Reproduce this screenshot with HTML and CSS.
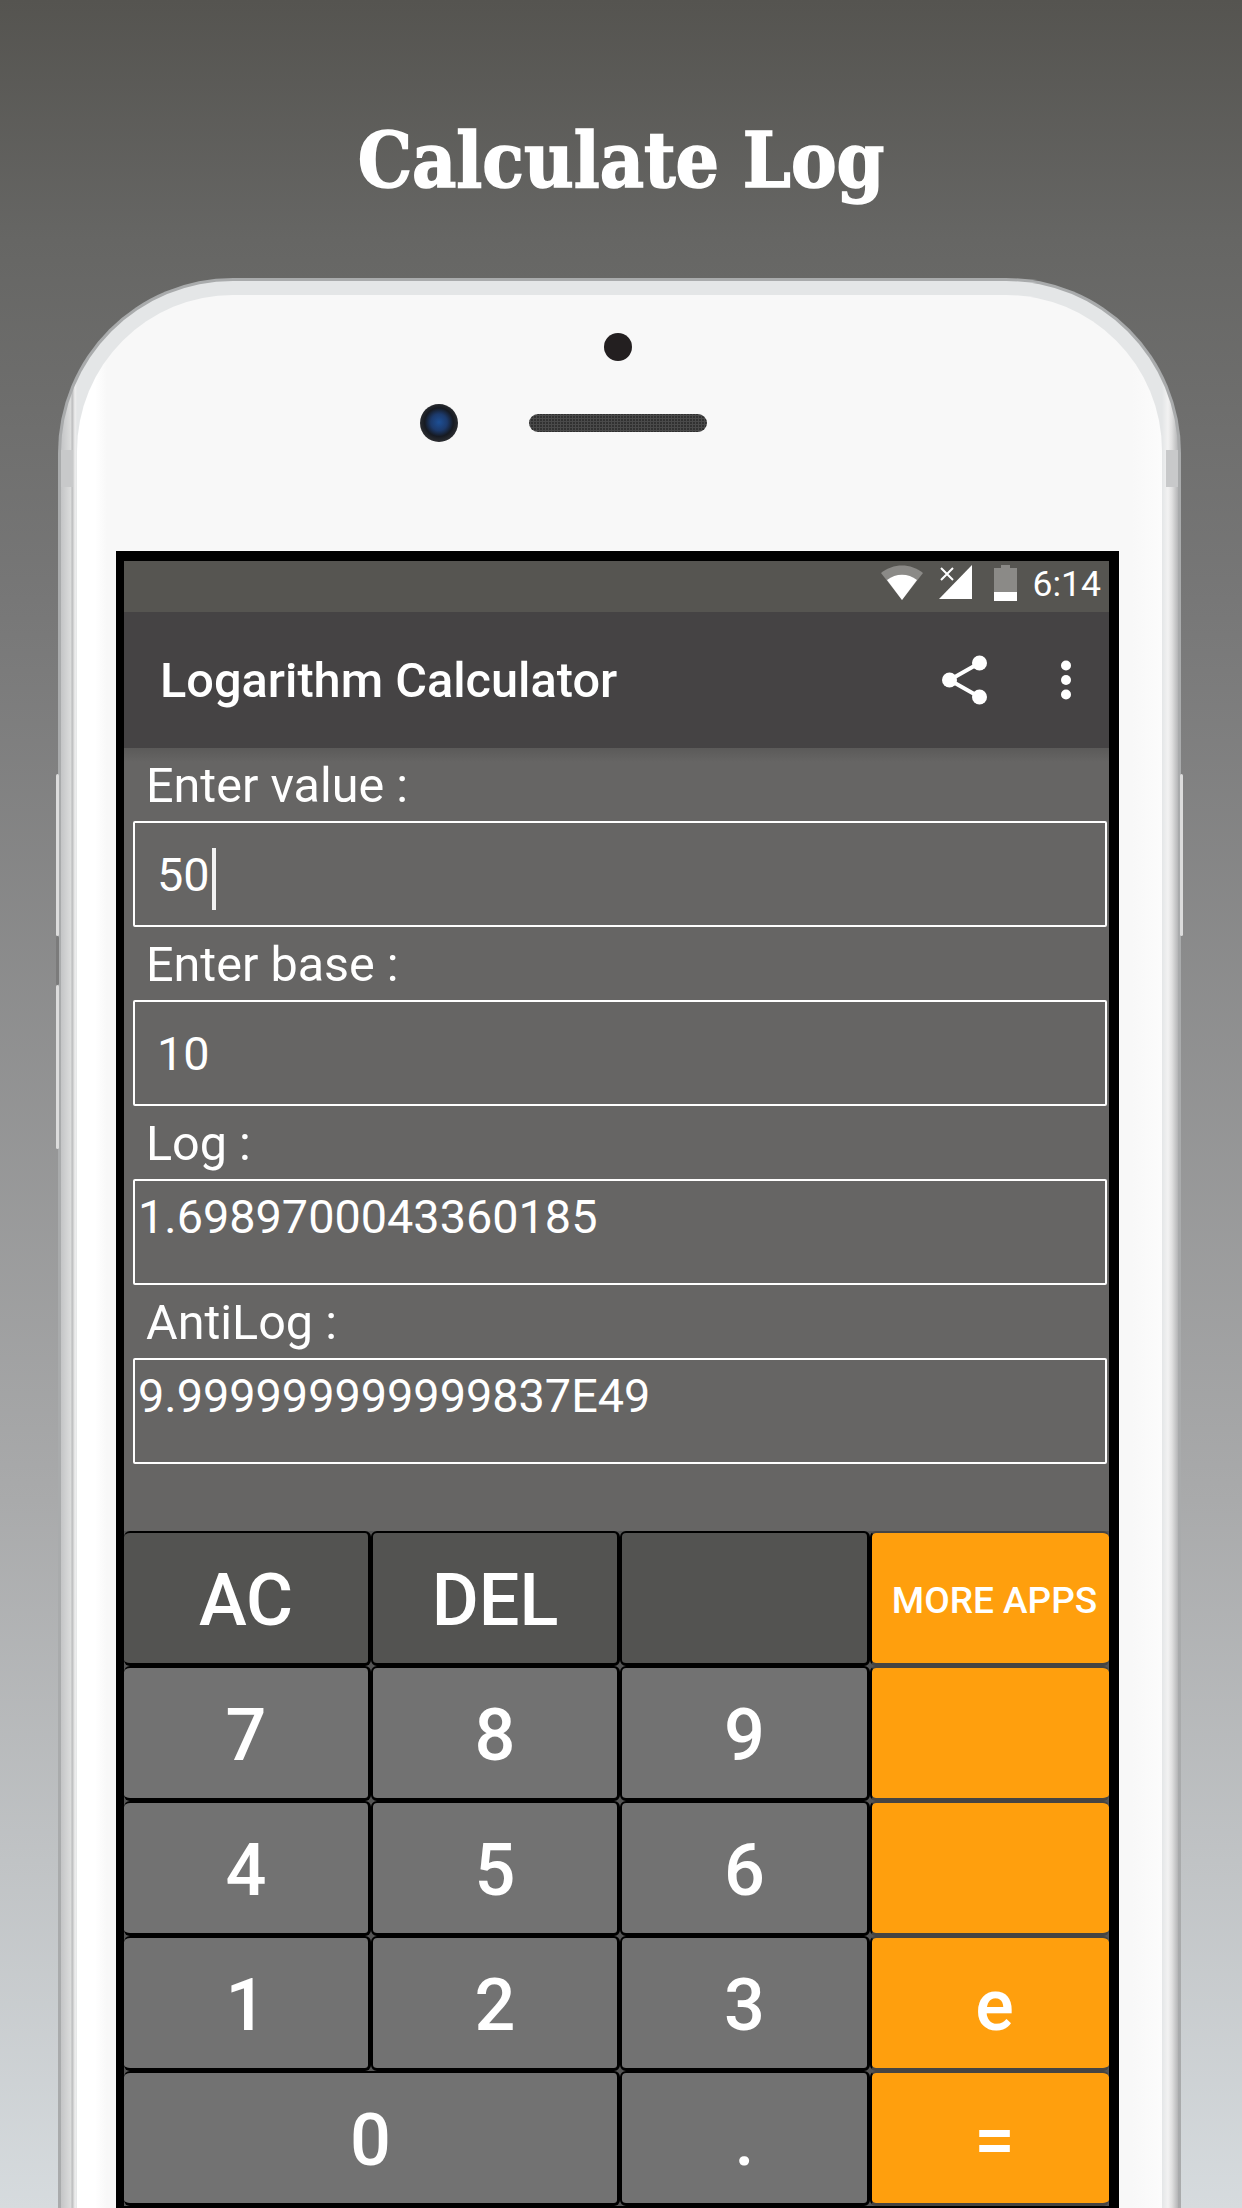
FILE: index.html
```html
<!DOCTYPE html>
<html lang="en">
<head>
    <meta charset="UTF-8">
    <meta name="viewport" content="width=device-width, initial-scale=1.0">
    <title>Calculate Log</title>
    <link rel="stylesheet" href="styles.css">
</head>
<body>

<h1 class="headline">Calculate Log</h1>

<div class="phone">
    <span class="side-btn side-left-1"></span>
    <span class="side-btn side-left-gap"></span>
    <span class="side-btn side-left-2"></span>
    <span class="side-btn side-right-1"></span>
    <span class="antenna antenna-left"></span>
    <span class="antenna antenna-right"></span>
    <div class="phone-band">
        <div class="phone-face">
            <div class="sensors">
                <span class="front-dot"></span>
                <div class="sensor-row">
                    <span class="camera"></span>
                    <span class="speaker"></span>
                </div>
            </div>

            <div class="screen">
                <div class="status-bar">
                    <svg class="wifi" width="42" height="35" viewBox="0 0 42 35">
                        <path d="M0 8 C12 -2 30 -2 42 8 L21 35 Z" fill="#8b8a87"/>
                        <path d="M6 15 C15 8 27 8 36 15 L21 35 Z" fill="#fff"/>
                    </svg>
                    <svg class="signal" width="34" height="36" viewBox="0 0 34 36">
                        <path d="M33 0 V34 H0 Z" fill="#fff"/>
                        <path d="M2 3 L14 15 M14 3 L2 15" stroke="#fff" stroke-width="2" fill="none"/>
                    </svg>
                    <svg class="battery" width="23" height="36" viewBox="0 0 23 36">
                        <path d="M7 0 H16 V3 H23 V28 H0 V3 H7 Z" fill="#8b8a87"/>
                        <rect x="0" y="27" width="23" height="9" fill="#fff"/>
                    </svg>
                    <span class="clock">6:14</span>
                </div>

                <div class="app-bar">
                    <span class="app-title">Logarithm Calculator</span>
                    <svg class="share" width="45" height="50" viewBox="0 0 45 50">
                        <path d="M7.500 25 L37.500 8 M7.500 25 L37.500 42" stroke="#fff" stroke-width="4" fill="none"/>
                        <circle cx="7.500" cy="25" r="7.500" fill="#fff"/>
                        <circle cx="37.500" cy="8" r="7.500" fill="#fff"/>
                        <circle cx="37.500" cy="42" r="7.500" fill="#fff"/>
                    </svg>
                    <svg class="overflow" width="10" height="40" viewBox="0 0 10 40">
                        <circle cx="5" cy="5.500" r="5" fill="#fff"/>
                        <circle cx="5" cy="20" r="5" fill="#fff"/>
                        <circle cx="5" cy="34.500" r="5" fill="#fff"/>
                    </svg>
                </div>

                <div class="fields">
                    <label class="field-label">Enter value :</label>
                    <div class="field-box field-input">50<span class="cursor"></span></div>

                    <label class="field-label">Enter base :</label>
                    <div class="field-box field-input">10</div>

                    <label class="field-label">Log :</label>
                    <div class="field-box field-result">1.6989700043360185</div>

                    <label class="field-label">AntiLog :</label>
                    <div class="field-box field-result">9.999999999999837E49</div>
                </div>

                <div class="keypad">
                    <div class="key key-dark">AC</div>
                    <div class="key key-dark">DEL</div>
                    <div class="key key-dark"></div>
                    <div class="key key-orange key-more">MORE APPS</div>

                    <div class="key">7</div>
                    <div class="key">8</div>
                    <div class="key">9</div>
                    <div class="key key-orange"></div>

                    <div class="key">4</div>
                    <div class="key">5</div>
                    <div class="key">6</div>
                    <div class="key key-orange"></div>

                    <div class="key">1</div>
                    <div class="key">2</div>
                    <div class="key">3</div>
                    <div class="key key-orange">e</div>

                    <div class="key key-wide">0</div>
                    <div class="key">.</div>
                    <div class="key key-orange">=</div>
                </div>
            </div>
        </div>
    </div>
</div>

</body>
</html>
```

FILE: styles.css
```css
html, body {
    margin: 0;
    padding: 0;
}

body {
    width: 1242px;
    height: 2208px;
    overflow: hidden;
    background: linear-gradient(180deg, #555450 0, #666664 240px, #777777 600px, #a9aaab 1500px, #d6dbde 2208px);
    font-family: Roboto, sans-serif;
    color: #fff;
}

.headline {
    margin: 0;
    height: 278px;
    box-sizing: border-box;
    padding-top: 116px;
    text-align: center;
    font-family: "DejaVu Serif", serif;
    font-stretch: condensed;
    font-weight: 700;
    font-size: 76px;
    line-height: 90px;
    -webkit-text-stroke: 1.5px #fff;
}

.phone {
    position: relative;
    width: 1123px;
    margin-left: 58px;
    height: 2000px;
    box-sizing: border-box;
    padding: 3px;
    border-radius: 175px 175px 0 0;
    background: #a9abac;
}

.side-btn {
    position: absolute;
    width: 3px;
    border-radius: 2px;
    background: #dcdcdc;
}

.side-left-1 { left: -2px; top: 496px; height: 162px; }
.side-left-gap { left: -2px; top: 658px; height: 49px; background: #7b7b7b; }
.side-left-2 { left: -2px; top: 707px; height: 164px; }
.side-right-1 { right: -2px; top: 496px; height: 162px; }

.antenna {
    position: absolute;
    top: 172px;
    width: 12px;
    height: 37px;
    background: #c8c9ca;
}

.antenna-left { left: 3px; }
.antenna-right { right: 3px; }

.phone-band {
    height: 100%;
    box-sizing: border-box;
    padding: 14px 16px 0;
    border-radius: 172px 172px 0 0;
    background: linear-gradient(90deg, #c4c5c6 0, #dcdddd 10px, #b8b9ba 11px, #eeeeee 14px, #e4e6e7 16px, #e4e6e7 calc(100% - 16px), #f2f2f2 calc(100% - 10px), #e0e0e0 calc(100% - 6px), #b4b5b6 100%);
}

.phone-face {
    height: 100%;
    box-sizing: border-box;
    padding: 0 43px 0 39px;
    border-radius: 156px 156px 0 0;
    background: linear-gradient(90deg, #ffffff 0, #ffffff 18px, #f8f8f8 30px, #f8f8f8 calc(100% - 30px), #fcfcfc 100%);
}

.sensors {
    height: 256px;
    box-sizing: border-box;
    padding-top: 38px;
    display: flex;
    flex-direction: column;
    align-items: center;
}

.front-dot {
    width: 28px;
    height: 28px;
    border-radius: 50%;
    background: #231f20;
}

.sensor-row {
    width: 100%;
    margin-top: 43px;
    display: grid;
    grid-template-columns: 1fr 178px 1fr;
    align-items: center;
}

.camera {
    justify-self: end;
    width: 38px;
    height: 38px;
    margin-right: 71px;
    border-radius: 50%;
    background: radial-gradient(circle at 50% 48%, #1d4f95 0, #1c3a6c 30%, #161a22 52%, #3b3b3b 85%, #8b8b8b 100%);
}

.speaker {
    height: 18px;
    border-radius: 9px;
    background: radial-gradient(circle, #4a4a4a 1px, #2c2c2c 1.5px) 0 0 / 3px 3px;
}

.screen {
    border: solid #000;
    border-width: 10px 10px 0 8px;
    height: 1650px;
    background: #000;
}

.status-bar {
    height: 51px;
    box-sizing: border-box;
    padding: 4px 8px 0 0;
    background: #565551;
    display: flex;
    align-items: flex-start;
    justify-content: flex-end;
}

.wifi { margin-right: 16px; }
.signal { margin-right: 21px; }
.battery { margin-right: 16px; }

.clock {
    font-size: 35.500px;
    line-height: 38px;
    font-weight: 400;
}

.app-bar {
    height: 136px;
    box-sizing: border-box;
    padding: 0 38px 0 36px;
    background: #454344;
    display: flex;
    align-items: center;
}

.app-title {
    flex: 1;
    font-size: 48.700px;
    font-weight: 500;
}

.share { margin-right: 74px; }

.fields {
    height: 783px;
    box-sizing: border-box;
    padding: 0 2px 0 9px;
    background: linear-gradient(180deg, #5b5a59 0, #666564 14px);
}

.field-label {
    display: block;
    height: 73px;
    padding-left: 13px;
    font-size: 48.500px;
    line-height: 76px;
}

.field-box {
    height: 106px;
    box-sizing: border-box;
    border: 2px solid #fff;
    border-radius: 2px;
    font-size: 46.800px;
}

.field-input {
    padding-left: 22px;
    line-height: 104px;
}

.field-result {
    padding-left: 3px;
    line-height: 72px;
}

.cursor {
    display: inline-block;
    width: 4px;
    height: 62px;
    margin-left: 2px;
    vertical-align: middle;
    background: #f2f2f2;
}

.keypad {
    display: grid;
    grid-template-columns: 247px 249px 250px 239px;
    grid-auto-rows: 135px;
    background: #555;
}

.key {
    display: flex;
    align-items: center;
    justify-content: center;
    box-sizing: border-box;
    padding-top: 5px;
    border: solid #000;
    border-width: 2px 3px 3px 2px;
    border-radius: 6px;
    background: #727272;
    background-clip: padding-box;
    font-size: 72px;
    font-weight: 500;
}

.key:nth-child(4n+1) { border-left-width: 0; }

.key-dark { background-color: #535351; }

.key-wide { grid-column: span 2; }

.key-orange {
    padding-left: 8px;
    border-color: #454443 #000 #454443 #000;
    border-width: 2px 0 3px 2px;
    background-color: #ff9f0d;
}

.key-more {
    font-size: 37px;
}
```
